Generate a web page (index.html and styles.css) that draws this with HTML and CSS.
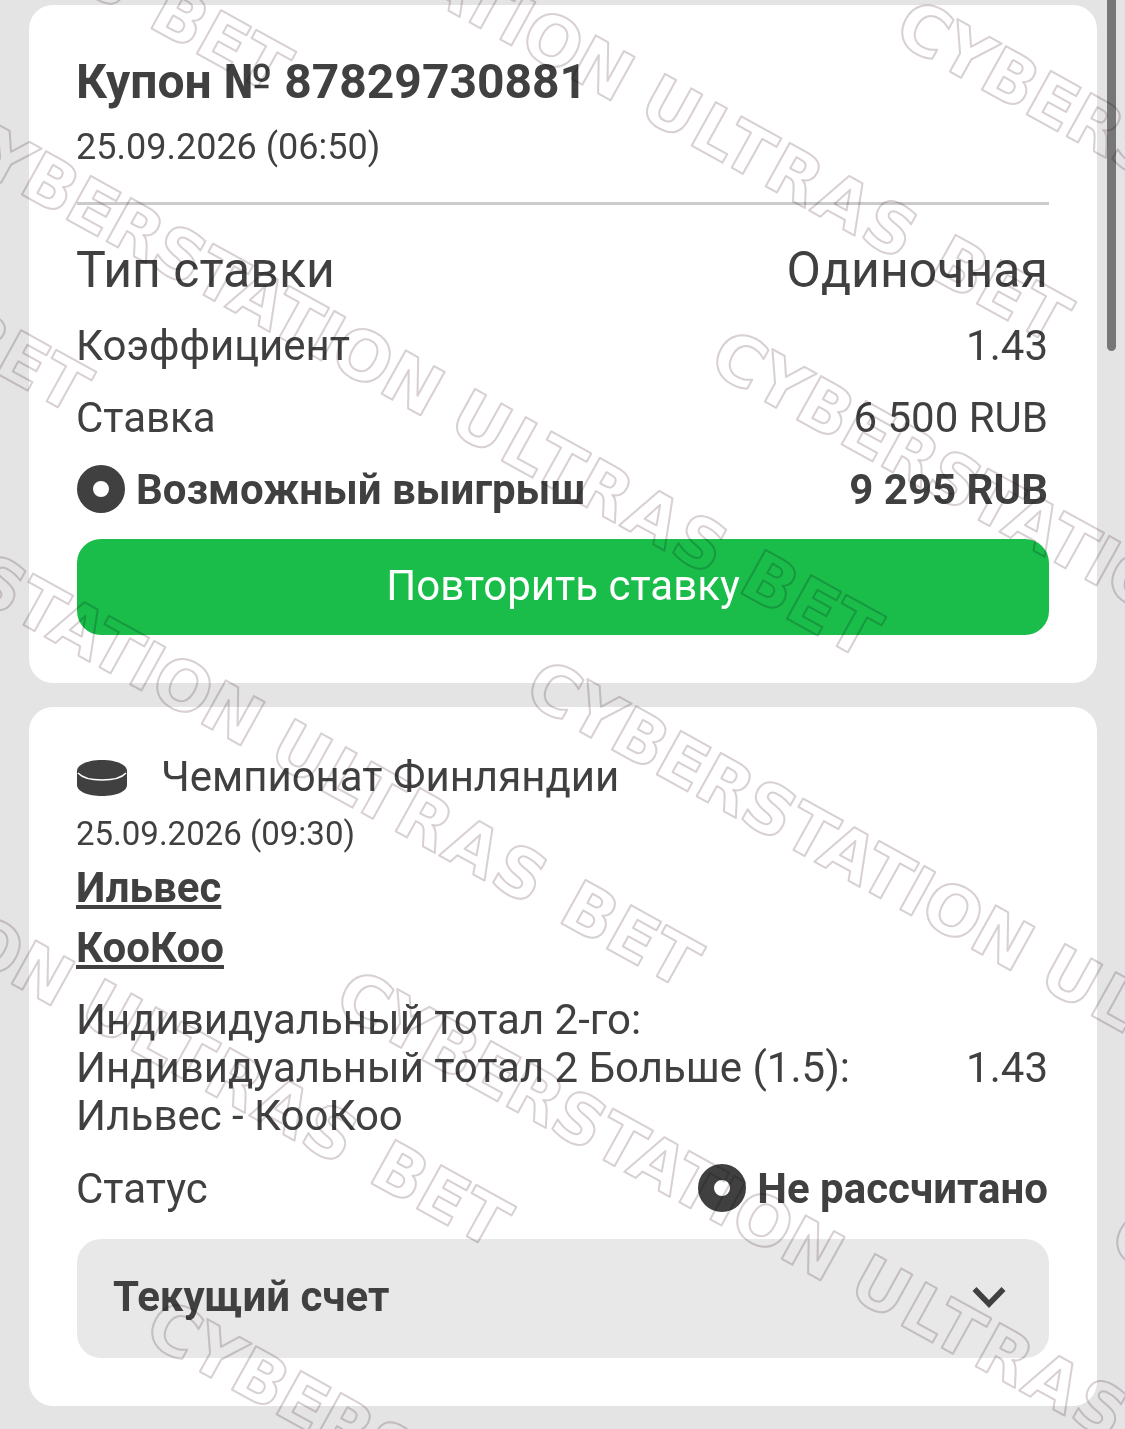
FILE: index.html
```html
<!DOCTYPE html>
<html lang="ru">
<head>
  <meta charset="UTF-8">
  <meta name="viewport" content="width=device-width, initial-scale=1.0">
  <title>Купон № 87829730881</title>
  <link rel="stylesheet" href="styles.css">
</head>
<body>

<div class="card card-coupon">
  <h1 class="coupon-title">Купон № 87829730881</h1>
  <p class="coupon-date">25.09.2026 (06:50)</p>
  <hr class="divider">
  <div class="row row-type"><span>Тип ставки</span><span>Одиночная</span></div>
  <div class="row"><span>Коэффициент</span><span>1.43</span></div>
  <div class="row"><span>Ставка</span><span>6 500 RUB</span></div>
  <div class="row row-bold">
    <span class="with-dot"><i class="dot"></i>Возможный выигрыш</span>
    <span>9 295 RUB</span>
  </div>
  <button class="repeat-btn">Повторить ставку</button>
</div>

<div class="card card-event">
  <div class="league">
    <svg class="puck" width="50" height="36" viewBox="0 0 50 36">
      <path fill="#404040" d="M0 11C0 4.500 11 0 25 0s25 4.500 25 11v14c0 6.500-11 11-25 11S0 31.500 0 25z"/>
      <path fill="none" stroke="#fff" stroke-width="1.500" d="M1 13c4 4.500 13 7 24 7s20-2.500 24-7"/>
    </svg>
    <span>Чемпионат Финляндии</span>
  </div>
  <p class="event-date">25.09.2026 (09:30)</p>
  <a class="team" href="#">Ильвес</a>
  <a class="team" href="#">КооКоо</a>
  <div class="bet">
    <div>Индивидуальный тотал 2-го:<br>Индивидуальный тотал 2 Больше (1.5):<br>Ильвес - КооКоо</div>
    <div class="bet-odds">1.43</div>
  </div>
  <div class="row row-status">
    <span>Статус</span>
    <span class="with-dot status-value"><i class="dot"></i>Не рассчитано</span>
  </div>
  <div class="score-box">
    <span>Текущий счет</span>
    <svg width="34" height="22" viewBox="0 0 34 22">
      <path fill="none" stroke="#404040" stroke-width="5.500" d="M2.500 3 17 18 31.500 3"/>
    </svg>
  </div>
</div>

<div class="scrollbar"></div>

<!-- watermark over the whole screenshot -->
<svg class="watermark" width="1125" height="1429" viewBox="0 0 1125 1429" aria-hidden="true">
  <text transform="translate(521 699) rotate(29)"><tspan class="wm-a">CYBERSTATION </tspan><tspan class="wm-b">ULTRAS </tspan><tspan>BET</tspan></text>
  <text transform="translate(331 1009) rotate(29)"><tspan class="wm-a">CYBERSTATION </tspan><tspan class="wm-b">ULTRAS </tspan><tspan>BET</tspan></text>
  <text transform="translate(891 39) rotate(29)"><tspan class="wm-a">CYBERSTATION </tspan><tspan class="wm-b">ULTRAS </tspan><tspan>BET</tspan></text>
  <text transform="translate(706 369) rotate(29)"><tspan class="wm-a">CYBERSTATION </tspan><tspan class="wm-b">ULTRAS </tspan><tspan>BET</tspan></text>
  <text transform="translate(-249 474) rotate(29)"><tspan class="wm-a">CYBERSTATION </tspan><tspan class="wm-b">ULTRAS </tspan><tspan>BET</tspan></text>
  <text transform="translate(121 -171) rotate(29)"><tspan class="wm-a">CYBERSTATION </tspan><tspan class="wm-b">ULTRAS </tspan><tspan>BET</tspan></text>
  <text transform="translate(-69 144) rotate(29)"><tspan class="wm-a">CYBERSTATION </tspan><tspan class="wm-b">ULTRAS </tspan><tspan>BET</tspan></text>
  <text transform="translate(-439 734) rotate(29)"><tspan class="wm-a">CYBERSTATION </tspan><tspan class="wm-b">ULTRAS </tspan><tspan>BET</tspan></text>
  <text transform="translate(141 1339) rotate(29)"><tspan class="wm-a">CYBERSTATION </tspan><tspan class="wm-b">ULTRAS </tspan><tspan>BET</tspan></text>
  <text transform="translate(-859 -101) rotate(29)"><tspan class="wm-a">CYBERSTATION </tspan><tspan class="wm-b">ULTRAS </tspan><tspan>BET</tspan></text>
  <text transform="translate(-659 -421) rotate(29)"><tspan class="wm-a">CYBERSTATION </tspan><tspan class="wm-b">ULTRAS </tspan><tspan>BET</tspan></text>
  <text transform="translate(1106 1249) rotate(29)"><tspan class="wm-a">CYBERSTATION </tspan><tspan class="wm-b">ULTRAS </tspan><tspan>BET</tspan></text>
</svg>

</body>
</html>
```

FILE: styles.css
```css
html, body {
  margin: 0;
  height: 1429px;
  overflow: hidden;
}
body {
  position: relative;
  box-sizing: border-box;
  padding: 5px 28px 0 29px;
  background: #e4e4e4;
  color: #404040;
  font-family: Roboto, "Noto Sans", sans-serif;
  font-size: 42px;
}
.card {
  background: #fff;
  border-radius: 24px;
  padding: 48px;
}
.card-event {
  margin-top: 24px;
}
.coupon-title {
  margin: 1px 0 0 -1px;
  font-size: 48px;
  line-height: 56px;
  font-weight: 700;
}
.coupon-date {
  margin: 15px 0 0 -1px;
  font-size: 36px;
  line-height: 44px;
}
.divider {
  margin: 33px 0 0;
  border: none;
  height: 3px;
  background: #cbcbcb;
}
.row {
  display: flex;
  justify-content: space-between;
  align-items: center;
  height: 72px;
  margin: 0 1px 0 -1px;
}
.row-type {
  margin-top: 29px;
  margin-bottom: 3px;
  font-size: 50px;
}
.row-bold {
  font-weight: 700;
}
.with-dot {
  display: flex;
  align-items: center;
}
.dot {
  box-sizing: border-box;
  width: 48px;
  height: 48px;
  margin: 0 11px 0 1px;
  border: 16px solid #404040;
  border-radius: 50%;
}
.repeat-btn {
  display: block;
  width: 100%;
  height: 96px;
  margin-top: 14px;
  padding-bottom: 5px;
  background: #1abc4a;
  color: #fff;
  border: none;
  border-radius: 24px;
  font-family: inherit;
  font-size: 42px;
}
.league {
  display: flex;
  align-items: center;
  height: 46px;
}
.league span {
  margin: 0 0 4px 34px;
}
.event-date {
  margin: 12px 0 0 -1px;
  font-size: 33px;
  line-height: 42px;
}
.team {
  display: block;
  width: max-content;
  margin-left: -1px;
  color: #404040;
  font-weight: 700;
  line-height: 60px;
}
.team:first-of-type {
  margin-top: 3px;
}
.bet {
  display: flex;
  justify-content: space-between;
  align-items: center;
  margin: 18px 1px 0 -1px;
  line-height: 48px;
}
.row-status {
  margin-top: 12px;
}
.status-value {
  font-weight: 700;
}
.score-box {
  display: flex;
  justify-content: space-between;
  align-items: center;
  height: 119px;
  margin-top: 15px;
  padding: 0 43px 4px 36px;
  box-sizing: border-box;
  background: #e8e8e8;
  border-radius: 24px;
  font-weight: 700;
}
.scrollbar {
  position: absolute;
  top: 0;
  left: 1107px;
  width: 9px;
  height: 351px;
  background: #777;
  border-radius: 0 0 5px 5px;
}
.watermark {
  position: absolute;
  top: 0;
  left: 0;
  pointer-events: none;
  mix-blend-mode: multiply;
}
.watermark text {
  font-family: "DejaVu Sans", sans-serif;
  font-weight: 700;
  font-size: 68px;
  fill: none;
  stroke: #d8d0d5;
  stroke-width: 2px;
  stroke-linejoin: round;
}
.wm-a {
  letter-spacing: -0.7px;
}
.wm-b {
  letter-spacing: 3px;
}
```
